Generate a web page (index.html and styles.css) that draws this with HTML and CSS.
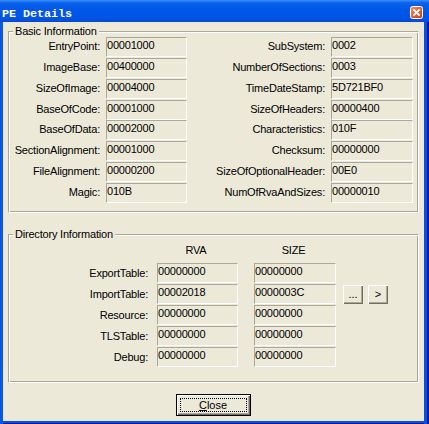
FILE: index.html
```html
<!DOCTYPE html>
<html>
<head>
<meta charset="utf-8">
<title>PE Details</title>
<link rel="stylesheet" href="styles.css">
</head>
<body>
<div class="window">
  <div class="titlebar">
    <span class="title">PE Details</span>
    <span class="close-x">
      <svg width="13" height="13" viewBox="0 0 13 13">
        <defs>
          <linearGradient id="rg" x1="0" y1="0" x2="1" y2="1">
            <stop offset="0" stop-color="#f0926f"/>
            <stop offset="0.5" stop-color="#e2603a"/>
            <stop offset="1" stop-color="#c43f1c"/>
          </linearGradient>
        </defs>
        <rect x="0.5" y="0.5" width="12" height="12" rx="2" fill="url(#rg)" stroke="#ffffff"/>
        <path d="M4 4 L9 9 M9 4 L4 9" stroke="#ffffff" stroke-width="1.8" stroke-linecap="square"/>
      </svg>
    </span>
  </div>
  <div class="frame">
    <div class="client">
      <section class="group basic">
        <div class="legend">Basic Information</div>
        <div class="basic-grid">
          <span class="label">EntryPoint:</span><span class="field">00001000</span>
          <span class="label">SubSystem:</span><span class="field">0002</span>
          <span class="label">ImageBase:</span><span class="field">00400000</span>
          <span class="label">NumberOfSections:</span><span class="field">0003</span>
          <span class="label">SizeOfImage:</span><span class="field">00004000</span>
          <span class="label">TimeDateStamp:</span><span class="field">5D721BF0</span>
          <span class="label">BaseOfCode:</span><span class="field">00001000</span>
          <span class="label">SizeOfHeaders:</span><span class="field">00000400</span>
          <span class="label">BaseOfData:</span><span class="field">00002000</span>
          <span class="label">Characteristics:</span><span class="field">010F</span>
          <span class="label">SectionAlignment:</span><span class="field">00001000</span>
          <span class="label">Checksum:</span><span class="field">00000000</span>
          <span class="label">FileAlignment:</span><span class="field">00000200</span>
          <span class="label">SizeOfOptionalHeader:</span><span class="field">00E0</span>
          <span class="label">Magic:</span><span class="field">010B</span>
          <span class="label">NumOfRvaAndSizes:</span><span class="field">00000010</span>
        </div>
      </section>

      <section class="group dir">
        <div class="legend">Directory Information</div>
        <div class="dir-grid">
          <span class="head c-rva">RVA</span><span class="head c-size">SIZE</span>

          <span class="label c-lab">ExportTable:</span><span class="field c-rva">00000000</span><span class="field c-size">00000000</span>
          <span class="label c-lab">ImportTable:</span><span class="field c-rva">00002018</span><span class="field c-size">0000003C</span><button class="sbtn c-b1">...</button><button class="sbtn c-b2">&gt;</button>
          <span class="label c-lab">Resource:</span><span class="field c-rva">00000000</span><span class="field c-size">00000000</span>
          <span class="label c-lab">TLSTable:</span><span class="field c-rva">00000000</span><span class="field c-size">00000000</span>
          <span class="label c-lab">Debug:</span><span class="field c-rva">00000000</span><span class="field c-size">00000000</span>
        </div>
      </section>

      <div class="footer">
        <button class="btn-close"><span class="focus"><u>C</u>lose</span></button>
      </div>
    </div>
  </div>
</div>
</body>
</html>
```

FILE: styles.css
```css
* { box-sizing: border-box; }

html, body {
  margin: 0;
  padding: 0;
  background: #ece9d8;
}

body {
  font-family: "Liberation Sans", Arial, sans-serif;
  font-size: 11px;
  line-height: 13px;
  letter-spacing: -0.2px;
  color: #000;
}

.window {
  width: 429px;
  height: 424px;
  display: flex;
  flex-direction: column;
}

.titlebar {
  height: 22px;
  flex: none;
  display: flex;
  justify-content: space-between;
  align-items: flex-start;
  padding: 0 6px 0 2px;
  background: linear-gradient(#3a8dff 0px, #0a62ec 3px, #0058e8 40%, #0054e3 85%, #0049d2 100%);
}

.title {
  font-family: "Liberation Mono", "Courier New", monospace;
  font-weight: bold;
  font-size: 11.7px;
  line-height: 12px;
  letter-spacing: 0;
  color: #fff;
  padding-top: 8px;
}

.close-x {
  margin-top: 6px;
  width: 13px;
  height: 13px;
  display: block;
}
.close-x svg { display: block; }

.frame {
  flex: 1;
  display: flex;
  padding: 0 5px 3px 3px;
  background:
    linear-gradient(#0a56e6, #0a56e6) left top / 3px 100% no-repeat,
    linear-gradient(to right, #0b4fdf 0 3px, #001a9c 3px) right top / 5px 100% no-repeat,
    linear-gradient(#0b4fdd 0 2px, #00189a 2px) left bottom / 100% 3px no-repeat;
}

.client {
  flex: 1;
  background: #ece9d8;
  display: flex;
  flex-direction: column;
}

/* group boxes, etched */
.group {
  width: 411px;
  margin-left: 5px;
  border: 1px solid;
  border-color: #aca899 #fff #fff #aca899;
  box-shadow: inset 1px 1px #fff, inset -1px -1px #aca899;
}

.basic {
  margin-top: 9px;
  height: 182px;
}

.dir {
  margin-top: 21px;
  height: 149px;
}

.legend {
  width: fit-content;
  margin: -7px 0 0 4px;
  padding: 0 2px;
  height: 13px;
  background: #ece9d8;
}

.basic .legend { margin-bottom: -1px; }
.dir .legend { margin-bottom: 3px; }

.basic-grid {
  display: grid;
  grid-template-columns: 97px 81px 144px 82px;
  grid-auto-rows: 20px;
  row-gap: 0.86px;
}

.label {
  text-align: right;
  padding-right: 6px;
  padding-top: 3px;
  white-space: nowrap;
}

.field {
  border: 1px solid;
  border-color: #aca899 #fff #fff #aca899;
  padding: 1px 0 0 0;
  white-space: nowrap;
}

.dir-grid {
  display: grid;
  grid-template-columns: 148px 81px 16px 82px 7px 20px 5px 20px;
  grid-template-rows: 18px repeat(5, 20px);
  row-gap: 1px;
}

.dir-grid .label { padding-right: 9px; padding-top: 4px; }

.c-lab { grid-column: 1; }
.c-rva { grid-column: 2; }
.c-size { grid-column: 4; }
.c-b1 { grid-column: 6; }
.c-b2 { grid-column: 8; }

.head {
  text-align: center;
  padding-right: 3px;
}

.sbtn {
  margin: 1px 0 0 0;
  height: 19px;
  padding: 0;
  font: inherit;
  letter-spacing: 0;
  color: #000;
  background: #ece9d8;
  border: none;
  box-shadow: inset 1px 1px #fff, inset -1px -1px #716f64, inset -2px -2px #aca899;
  display: flex;
  align-items: center;
  justify-content: center;
}

.footer {
  display: flex;
  justify-content: center;
  padding-top: 11px;
  padding-right: 1px;
}

.btn-close {
  width: 75px;
  height: 22px;
  padding: 0;
  margin: 0;
  font: inherit;
  color: #000;
  background: #ece9d8;
  border: 1px solid #000;
  box-shadow: inset 1px 1px #fff, inset -1px -1px #716f64, inset -2px -2px #aca899;
  display: flex;
  align-items: stretch;
}

.focus {
  flex: 1;
  margin: 3px;
  border: 1px dotted #000;
  display: flex;
  align-items: center;
  justify-content: center;
  line-height: 13px;
}

.focus u {
  text-decoration: underline;
  text-underline-offset: 1px;
}
```
